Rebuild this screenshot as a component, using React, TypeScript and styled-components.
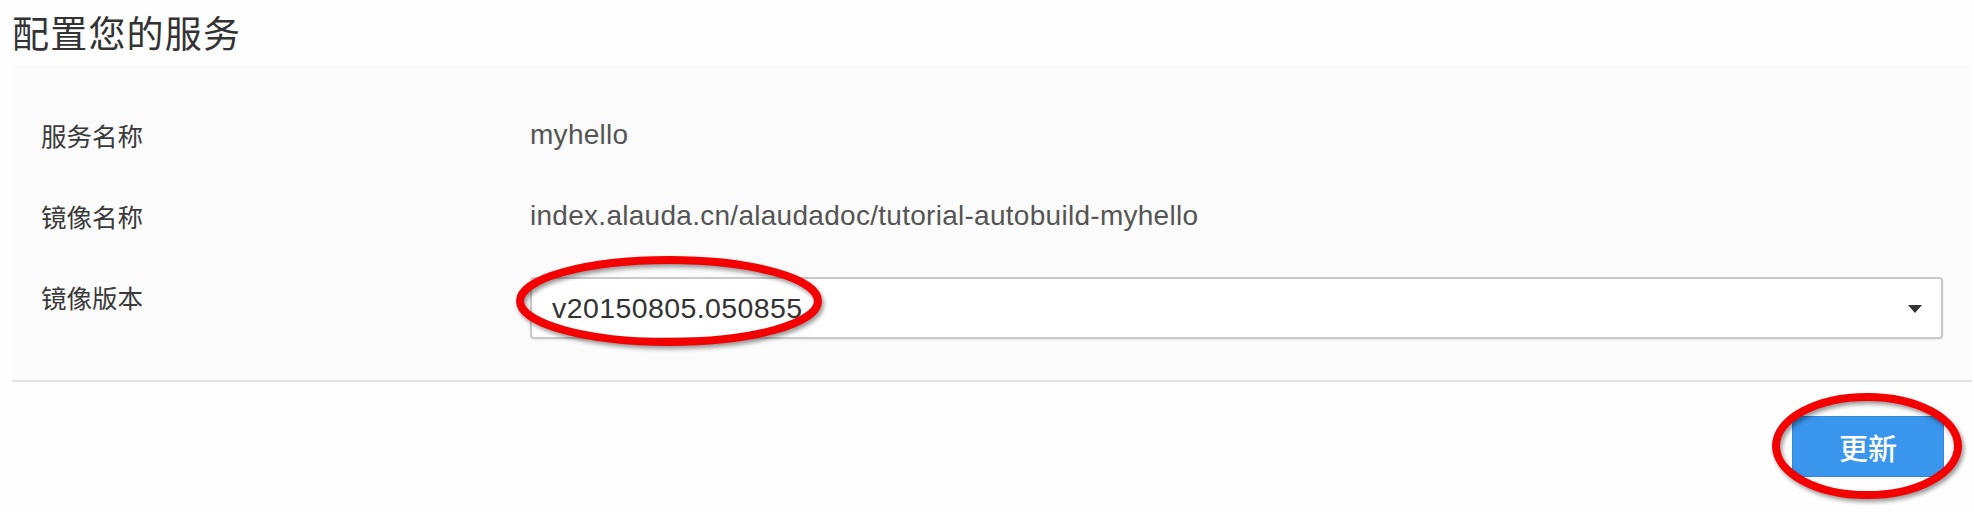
import React from "react";
import styled, { createGlobalStyle } from "styled-components";

const GlobalStyle = createGlobalStyle`
  html, body {
    margin: 0;
    padding: 0;
    background: #fefefe;
  }
  body {
    font-family: "Liberation Sans", "Noto Sans CJK SC", sans-serif;
    color: #333;
  }
`;

const Page = styled.div`
  position: relative;
  width: 1974px;
  height: 512px;
  padding: 0 2px 0 12px;
  box-sizing: border-box;
  overflow: hidden;
`;

const Title = styled.h2`
  margin: 0;
  height: 65px;
  display: flex;
  align-items: center;
  padding-bottom: 2px;
  box-sizing: border-box;
  font-family: "Noto Sans CJK SC", sans-serif;
  font-weight: 400;
  font-size: 37px;
  color: #333;
  letter-spacing: 1.2px;
`;

const Panel = styled.div`
  background: #fbfbfb;
  padding: 50px 29px 41px;
  display: flex;
  flex-direction: column;
  gap: 41px;
  border-bottom: 2px solid #e3e3e3;
`;

const Row = styled.div`
  display: grid;
  grid-template-columns: 489px 1fr;
  align-items: start;
`;

const Label = styled.div`
  font-family: "Noto Sans CJK SC", sans-serif;
  font-size: 25.5px;
  line-height: 40px;
  color: #3a3a3a;
`;

const Value = styled.div`
  font-family: "Liberation Sans", "Noto Sans CJK SC", sans-serif;
  font-size: 28px;
  line-height: 40px;
  color: #555;
  letter-spacing: 0.28px;
`;

const Select = styled.div`
  height: 62px;
  box-sizing: border-box;
  border: 2px solid #c9c9c9;
  border-radius: 4px;
  background: #fff;
  box-shadow: 0 1px 2px rgba(0, 0, 0, 0.08);
  display: flex;
  align-items: center;
  justify-content: space-between;
  padding: 0 19px 0 20px;
  font-family: "Liberation Sans", sans-serif;
  font-size: 28.5px;
  letter-spacing: 0.4px;
  color: #333;
`;

const Caret = styled.span`
  width: 0;
  height: 0;
  border-left: 7.5px solid transparent;
  border-right: 7.5px solid transparent;
  border-top: 8px solid #333;
  margin-top: 2px;
`;

const Footer = styled.div`
  display: flex;
  justify-content: flex-end;
  padding: 34px 28px 0 0;
`;

const Button = styled.button`
  width: 152px;
  height: 61px;
  background: #3a95ed;
  border: 1px solid #3389dc;
  border-radius: 2px;
  color: #fff;
  font-family: "Noto Sans CJK SC", sans-serif;
  font-size: 29px;
  font-weight: 500;
  cursor: pointer;
  padding: 0;
`;

const Overlay = styled.svg`
  position: absolute;
  left: 0;
  top: 0;
  pointer-events: none;
  overflow: visible;
`;

const Ring = styled.ellipse`
  fill: none;
  stroke: #f40000;
  stroke-width: 8;
  filter: drop-shadow(2px 3px 2px rgba(0, 0, 0, 0.4));
`;

export default function App() {
  return (
    <>
      <GlobalStyle />
      <Page>
        <Title>配置您的服务</Title>
        <Panel>
          <Row>
            <Label>服务名称</Label>
            <Value>myhello</Value>
          </Row>
          <Row>
            <Label>镜像名称</Label>
            <Value>index.alauda.cn/alaudadoc/tutorial-autobuild-myhello</Value>
          </Row>
          <Row>
            <Label>镜像版本</Label>
            <Select>
              <span>v20150805.050855</span>
              <Caret />
            </Select>
          </Row>
        </Panel>
        <Footer>
          <Button>更新</Button>
        </Footer>
        <Overlay width="1974" height="512" viewBox="0 0 1974 512">
          <Ring cx="669" cy="301" rx="149" ry="41" />
          <Ring cx="1867" cy="446" rx="91" ry="49" />
        </Overlay>
      </Page>
    </>
  );
}
